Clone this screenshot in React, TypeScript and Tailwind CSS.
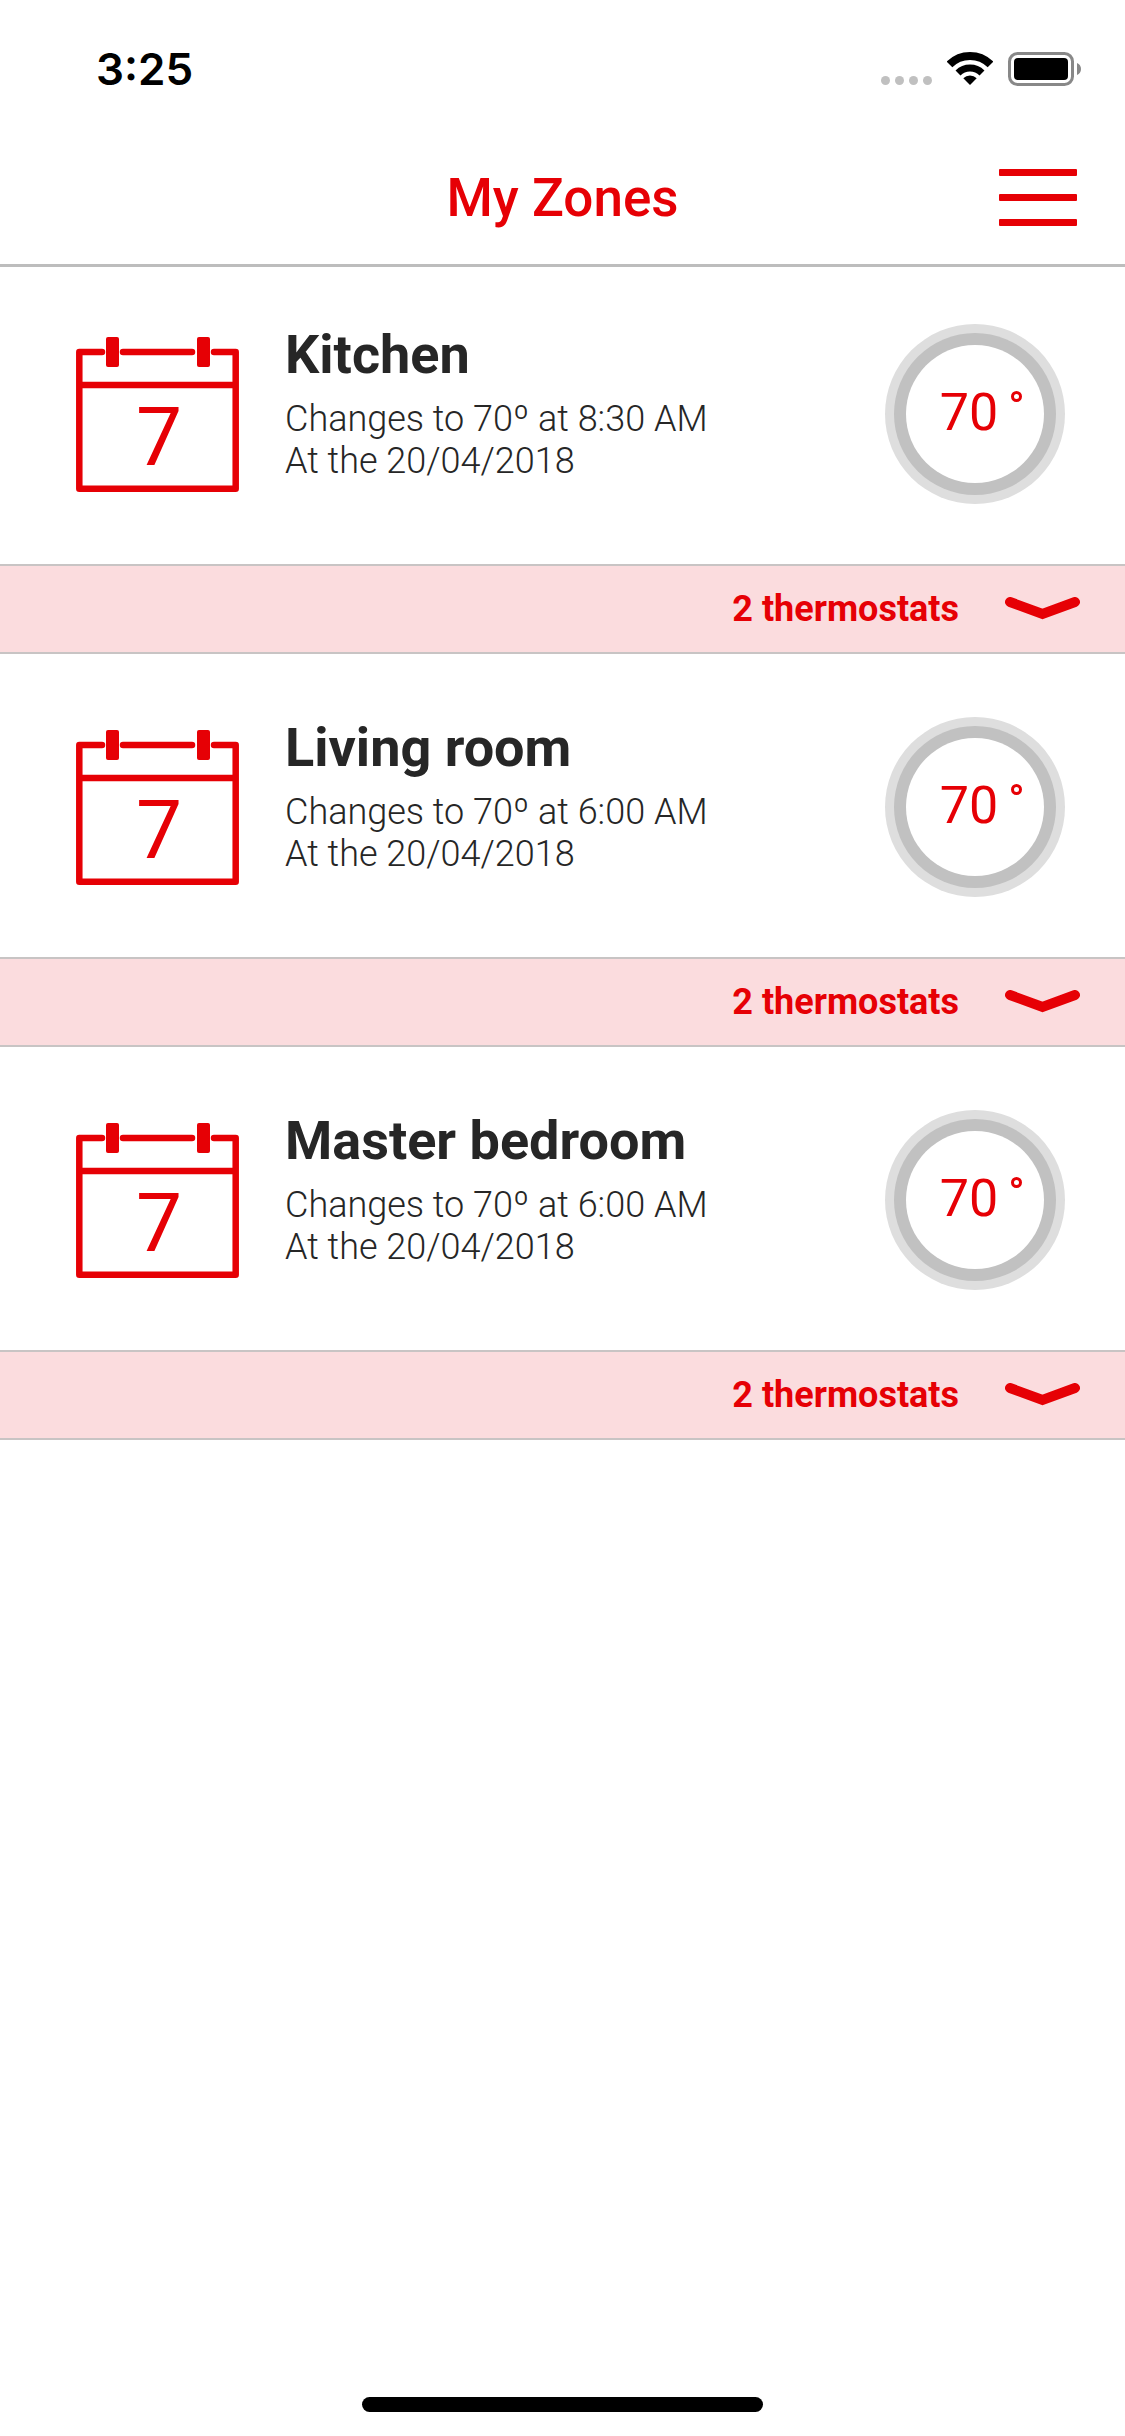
const zones = [
  { name: 'Kitchen', change: 'Changes to 70º at 8:30 AM', date: 'At the 20/04/2018' },
  { name: 'Living room', change: 'Changes to 70º at 6:00 AM', date: 'At the 20/04/2018' },
  { name: 'Master bedroom', change: 'Changes to 70º at 6:00 AM', date: 'At the 20/04/2018' },
]

function WifiIcon() {
  return (
    <svg width="46" height="33" viewBox="0 0 46 33" fill="none">
      <path d="M2.5 12.5A29 29 0 0 1 43.5 12.5" stroke="#000" strokeWidth="8" />
      <path d="M11 21A17 17 0 0 1 35 21" stroke="#000" strokeWidth="7" />
      <path d="M23 33L16.3 26.3A9.5 9.5 0 0 1 29.7 26.3Z" fill="#000" />
    </svg>
  )
}

function BatteryIcon() {
  return (
    <svg width="73" height="34" viewBox="0 0 73 34" fill="none">
      <rect x="1.5" y="1.5" width="63" height="31" rx="8" stroke="#888" strokeWidth="3" />
      <rect x="6" y="6" width="54" height="22" rx="4" fill="#000" />
      <path d="M69 11C71.500 12 73 14 73 17C73 20 71.500 22 69 23Z" fill="#888" />
    </svg>
  )
}

function CalendarIcon() {
  return (
    <svg width="163" height="155" viewBox="0 0 163 155" fill="none" className="shrink-0">
      <path d="M26 15H3.300V151.700H159.700V15H138" stroke="#e60005" strokeWidth="6.500" strokeLinecap="round" strokeLinejoin="round" />
      <path d="M47 15H116" stroke="#e60005" strokeWidth="6.500" strokeLinecap="round" />
      <path d="M3 48H160" stroke="#e60005" strokeWidth="6.500" />
      <rect x="30" y="0" width="13" height="30" rx="2" fill="#e60005" />
      <rect x="121" y="0" width="13" height="30" rx="2" fill="#e60005" />
      <text x="83" y="128" textAnchor="middle" fontSize="82" fill="#e60005" className="font-[Roboto] font-normal">
        7
      </text>
    </svg>
  )
}

function Chevron() {
  return (
    <svg width="75" height="24" viewBox="0 0 75 24" fill="none">
      <path d="M5 5L37.500 17L70 5" stroke="#e60005" strokeWidth="10" strokeLinecap="round" />
    </svg>
  )
}

function Thermostat() {
  return (
    <div className="w-[180px] h-[180px] rounded-full bg-[#dedede] flex items-center justify-center shrink-0">
      <div className="w-[162px] h-[162px] rounded-full bg-[#c1c1c1] flex items-center justify-center">
        <div className="w-[138px] h-[138px] rounded-full bg-white flex items-start justify-center pt-[37px] pl-[12px]">
          <span className="text-[52px] leading-[61px] text-[#e60005]">70</span>
          <span className="ml-[13px] mt-[9px] w-[11px] h-[11px] rounded-full border-[3px] border-[#e60005]" />
        </div>
      </div>
    </div>
  )
}

export default function App() {
  return (
    <main className="w-[1125px] h-[2436px] bg-white flex flex-col font-[Roboto]">
      {/* Status bar */}
      <div className="h-[124px] flex items-start justify-between pt-[42px] pl-[96px] pr-[44px]">
        <span className="text-[44px] leading-[54px] font-semibold text-black font-[Inter]">3:25</span>
        <div className="flex items-start pt-[10px]">
          <div className="flex gap-[5px] mt-[24px] mr-[15px]">
            <span className="w-[9px] h-[9px] rounded-full bg-[#c0c0c0]" />
            <span className="w-[9px] h-[9px] rounded-full bg-[#c0c0c0]" />
            <span className="w-[9px] h-[9px] rounded-full bg-[#c0c0c0]" />
            <span className="w-[9px] h-[9px] rounded-full bg-[#c0c0c0]" />
          </div>
          <WifiIcon />
          <div className="ml-[15px]">
            <BatteryIcon />
          </div>
        </div>
      </div>

      {/* Header */}
      <div className="h-[143px] grid grid-cols-[1fr_auto_1fr] items-start border-b-[3px] border-[#bdbdbd]">
        <div />
        <h1 className="text-[53px] leading-[62px] font-medium text-[#e60005] pt-[43px]">My Zones</h1>
        <div className="flex flex-col items-end gap-[18px] pr-[48px] pt-[45px]">
          <span className="w-[78px] h-[7px] rounded-[1px] bg-[#e60005]" />
          <span className="w-[78px] h-[7px] rounded-[1px] bg-[#e60005]" />
          <span className="w-[78px] h-[7px] rounded-[1px] bg-[#e60005]" />
        </div>
      </div>

      {/* Zones */}
      {zones.map((zone, i) => (
        <div key={zone.name}>
          <div className={i === 0 ? 'h-[297px] pt-[57px]' : 'h-[303px] pt-[63px]'}>
            <div className="flex items-center h-[180px] pl-[76px] pr-[60px]">
              <CalendarIcon />
              <div className="flex-1 ml-[46px] pb-[23px] text-[#262626]">
                <p className="text-[54px] leading-[63px] font-bold">{zone.name}</p>
                <p className="text-[36px] leading-[42px] font-light mt-[12px]">{zone.change}</p>
                <p className="text-[36px] leading-[42px] font-light">{zone.date}</p>
              </div>
              <Thermostat />
            </div>
          </div>
          <div className="h-[90px] bg-[#fbdcde] border-y-[2px] border-[#c8c4c4] flex items-center justify-end pr-[45px] gap-[46px]">
            <span className="text-[36px] leading-[42px] font-bold text-[#e60005]">2 thermostats</span>
            <Chevron />
          </div>
        </div>
      ))}

      {/* Home indicator */}
      <div className="mt-auto flex justify-center pb-[24px]">
        <div className="w-[401px] h-[15px] rounded-full bg-black" />
      </div>
    </main>
  )
}
